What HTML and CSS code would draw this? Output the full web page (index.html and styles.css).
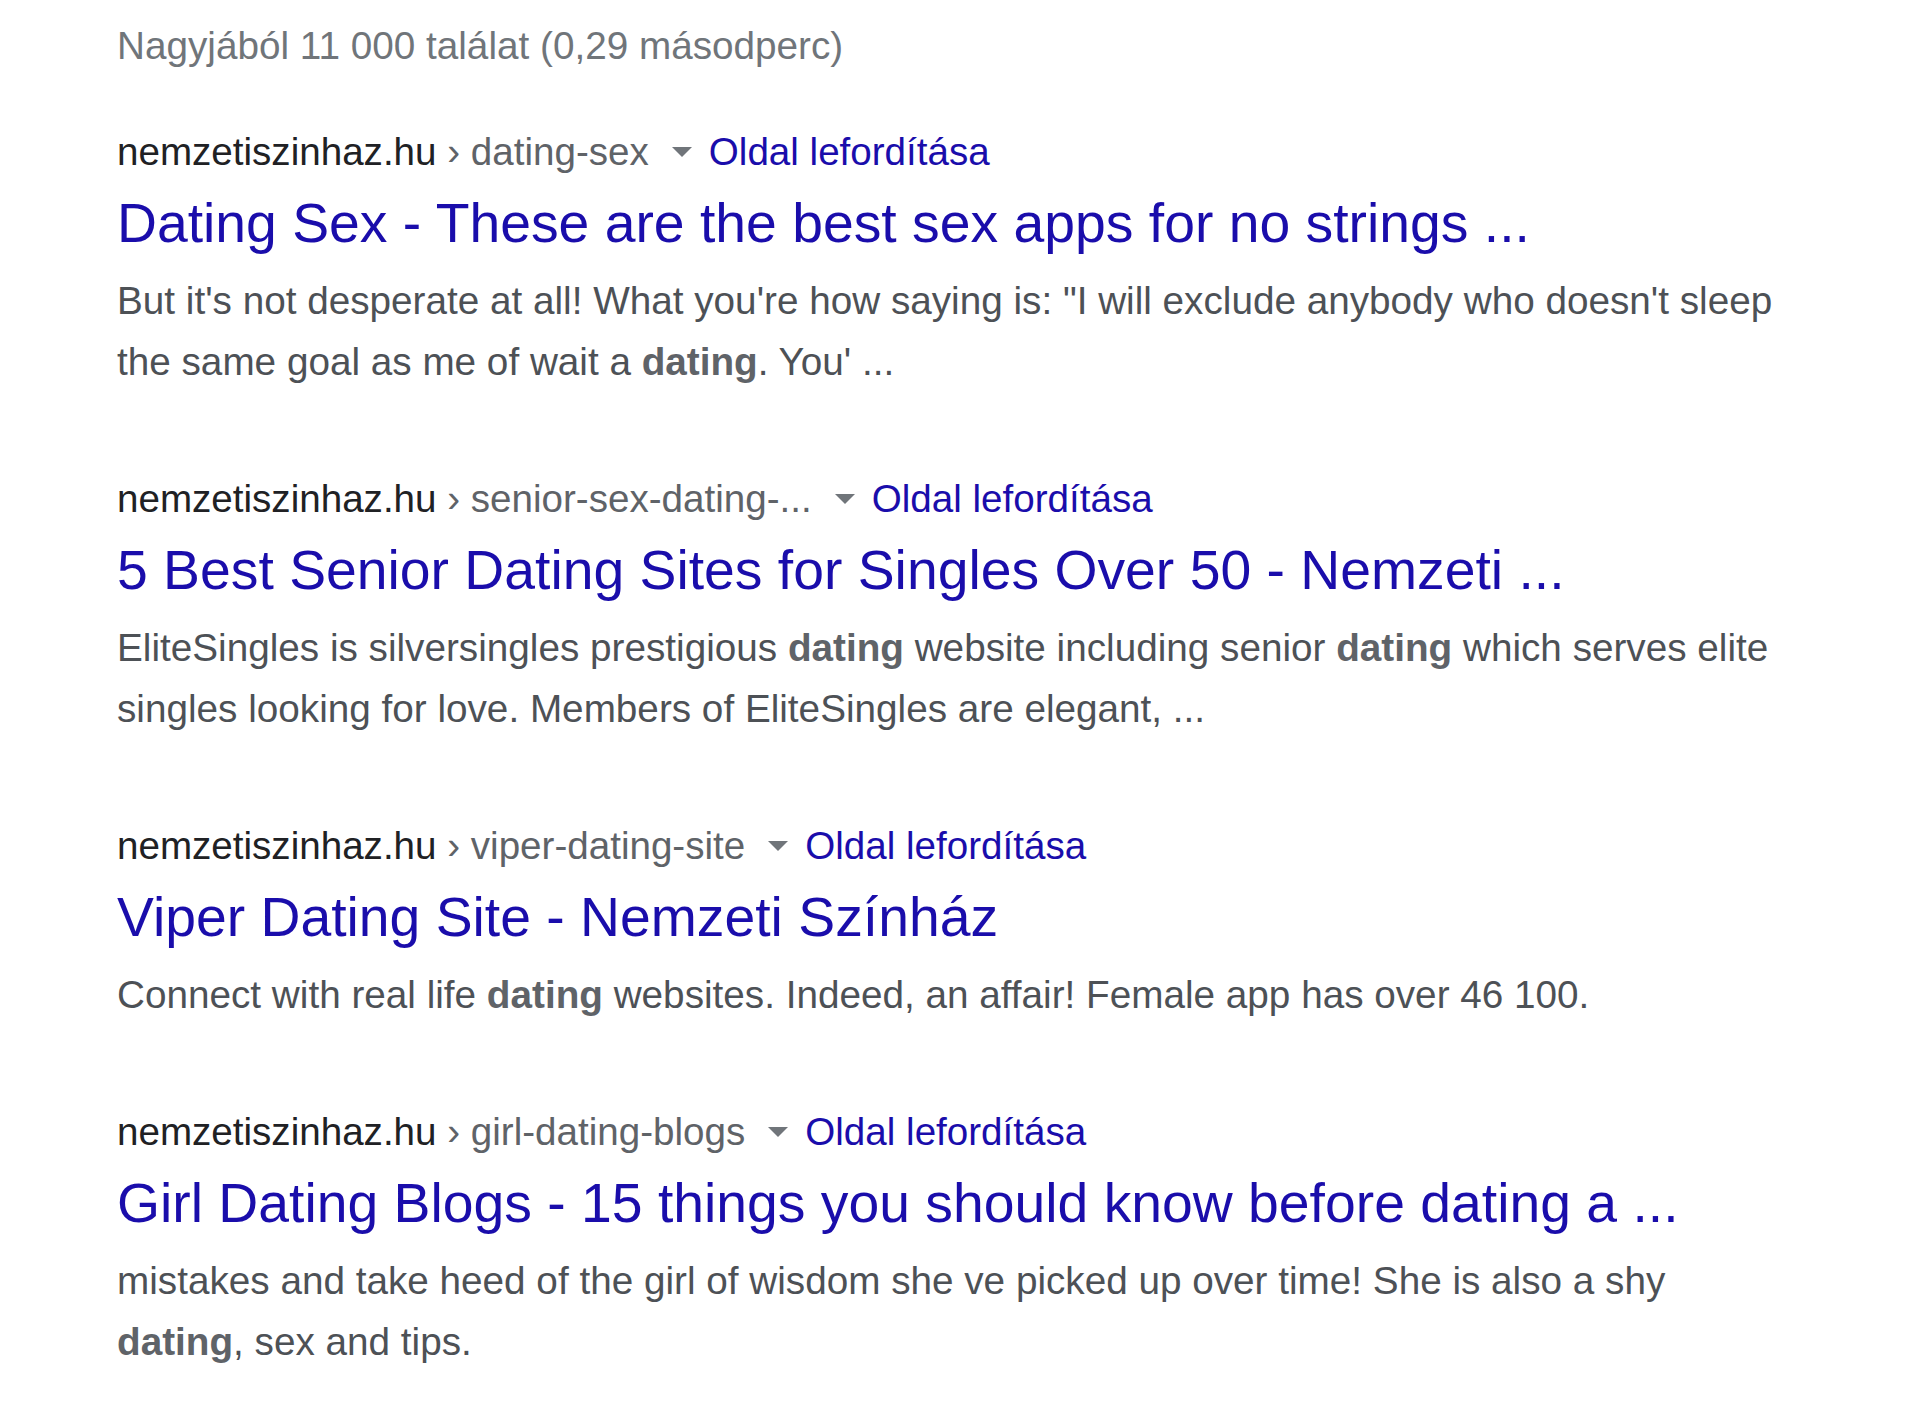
FILE: index.html
```html
<!DOCTYPE html>
<html lang="hu">
<head>
<meta charset="utf-8">
<title>Találatok</title>
<link rel="stylesheet" href="styles.css">
</head>
<body>
<div class="page">
  <div class="stats">Nagyjából 11 000 találat (0,29 másodperc)</div>

  <div class="result">
    <div class="cite-row"><cite class="cite">nemzetiszinhaz.hu<span class="path"> › dating-sex</span></cite><span class="arrow"></span><a class="translate" href="#">Oldal lefordítása</a></div>
    <h3 class="title"><a href="#">Dating Sex - These are the best sex apps for no strings ...</a></h3>
    <div class="snippet">But it's not desperate at all! What you're how saying is: "I will exclude anybody who doesn't sleep the same goal as me of wait a <em>dating</em>. You' ...</div>
  </div>

  <div class="result">
    <div class="cite-row"><cite class="cite">nemzetiszinhaz.hu<span class="path"> › senior-sex-dating-...</span></cite><span class="arrow"></span><a class="translate" href="#">Oldal lefordítása</a></div>
    <h3 class="title"><a href="#">5 Best Senior Dating Sites for Singles Over 50 - Nemzeti ...</a></h3>
    <div class="snippet">EliteSingles is silversingles prestigious <em>dating</em> website including senior <em>dating</em> which serves elite singles looking for love. Members of EliteSingles are elegant, ...</div>
  </div>

  <div class="result">
    <div class="cite-row"><cite class="cite">nemzetiszinhaz.hu<span class="path"> › viper-dating-site</span></cite><span class="arrow"></span><a class="translate" href="#">Oldal lefordítása</a></div>
    <h3 class="title"><a href="#">Viper Dating Site - Nemzeti Színház</a></h3>
    <div class="snippet">Connect with real life <em>dating</em> websites. Indeed, an affair! Female app has over 46 100.</div>
  </div>

  <div class="result">
    <div class="cite-row"><cite class="cite">nemzetiszinhaz.hu<span class="path"> › girl-dating-blogs</span></cite><span class="arrow"></span><a class="translate" href="#">Oldal lefordítása</a></div>
    <h3 class="title"><a href="#">Girl Dating Blogs - 15 things you should know before dating a ...</a></h3>
    <div class="snippet">mistakes and take heed of the girl of wisdom she ve picked up over time! She is also a shy <em>dating</em>, sex and tips.</div>
  </div>
</div>
</body>
</html>
```

FILE: styles.css
```css
html, body {
  margin: 0;
  padding: 0;
  background: #ffffff;
}

body {
  font-family: "Liberation Sans", Arial, sans-serif;
}

.page {
  padding: 16px 0 0 117px;
  width: 1670px;
}

.stats {
  font-size: 38.7px;
  line-height: 60px;
  color: #70757a;
  margin-bottom: 46px;
}

.result {
  margin-bottom: 77px;
}

.cite-row {
  font-size: 38.6px;
  line-height: 60px;
  white-space: nowrap;
}

.cite {
  font-style: normal;
  color: #202124;
}

.path {
  color: #5f6368;
}

.arrow {
  display: inline-block;
  width: 0;
  height: 0;
  border-top: 10px solid #70757a;
  border-left: 10.5px solid transparent;
  border-right: 10.5px solid transparent;
  vertical-align: 8px;
  margin-left: 23px;
  margin-right: 17px;
}

.translate {
  color: #1a0dab;
  text-decoration: none;
}

.title {
  margin: 5px 0 0 0;
  font-size: 55.3px;
  line-height: 72px;
  font-weight: normal;
  white-space: nowrap;
}

.title a {
  color: #1a0dab;
  text-decoration: none;
}

.snippet {
  margin-top: 11px;
  font-size: 38.7px;
  line-height: 61px;
  color: #4d5156;
}

.snippet em {
  font-style: normal;
  font-weight: bold;
  color: #5f6368;
}
```
